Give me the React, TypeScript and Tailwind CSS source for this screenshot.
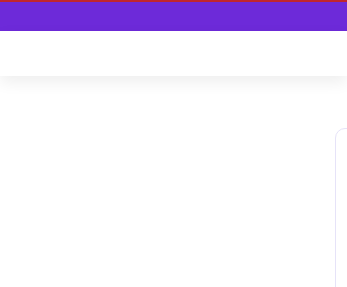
import React from 'react'

export default function App() {
  return (
    <div className="h-screen w-full bg-white font-['Liberation_Sans',sans-serif] overflow-hidden">
      <div className="h-[2px] bg-[#c0262d]" />
      <div className="h-[29px] bg-[#6d2ad9]" />
      <header className="relative z-10 h-[45px] bg-white shadow-[0_6px_16px_rgba(0,0,0,0.07)]" />
      <main className="flex pt-[52px]">
        <div className="w-[335px] shrink-0" />
        <div className="w-[240px] h-[220px] shrink-0 rounded-tl-[10px] border border-[#e6e3f8] bg-white" />
      </main>
    </div>
  )
}
